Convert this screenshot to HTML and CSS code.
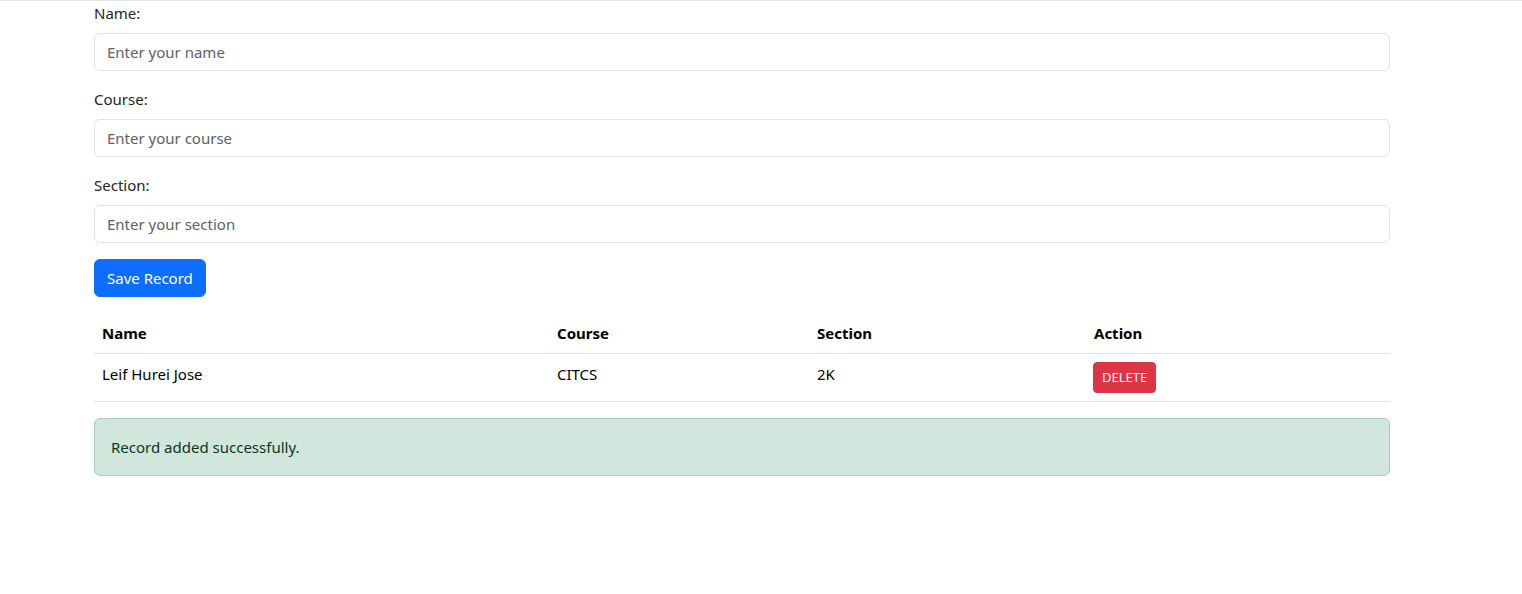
FILE: index.html
```html
<!DOCTYPE html>
<html lang="en">
<head>
<meta charset="utf-8">
<title>Records</title>
<link rel="stylesheet" href="styles.css">
</head>
<body>
<div class="topline"></div>
<main class="container">
  <form class="record-form">
    <div class="field">
      <label class="form-label">Name:</label>
      <input class="form-control" type="text" placeholder="Enter your name">
    </div>
    <div class="field">
      <label class="form-label">Course:</label>
      <input class="form-control" type="text" placeholder="Enter your course">
    </div>
    <div class="field">
      <label class="form-label">Section:</label>
      <input class="form-control" type="text" placeholder="Enter your section">
    </div>
    <button type="button" class="btn btn-primary">Save Record</button>
  </form>

  <table class="table">
    <thead>
      <tr>
        <th class="col-name">Name</th>
        <th class="col-course">Course</th>
        <th class="col-section">Section</th>
        <th class="col-action">Action</th>
      </tr>
    </thead>
    <tbody>
      <tr>
        <td>Leif Hurei Jose</td>
        <td>CITCS</td>
        <td>2K</td>
        <td><button type="button" class="btn btn-danger btn-sm">DELETE</button></td>
      </tr>
    </tbody>
  </table>

  <div class="alert alert-success">Record added successfully.</div>
</main>
</body>
</html>
```

FILE: styles.css
```css
* { box-sizing: border-box; }

html, body {
  margin: 0;
  padding: 0;
  background: #fff;
}

body {
  font-family: "Noto Sans", "Open Sans", "Liberation Sans", sans-serif;
  font-size: 16px;
  line-height: 24px;
  color: #212529;
}

.topline {
  height: 1px;
  background: #dee2e6;
}

.container {
  width: 1296px;
  margin-left: 94px;
  padding-top: 0;
}

.record-form {
  display: flex;
  flex-direction: column;
  align-items: flex-start;
}

.field {
  width: 100%;
  margin-bottom: 16px;
}

.form-label {
  display: block;
  margin-bottom: 8px;
  font-size: 15px;
}

.form-control {
  display: block;
  width: 100%;
  height: 38px;
  padding: 6px 12px;
  font-family: inherit;
  font-size: 15px;
  line-height: 24px;
  color: #212529;
  background: #fff;
  border: 1px solid #dee2e6;
  border-radius: 6px;
  outline: none;
}

.form-control::placeholder {
  color: #5c6166;
  opacity: 1;
}

.btn {
  font-family: inherit;
  border: 1px solid transparent;
  cursor: pointer;
  color: #fff;
}

.btn-primary {
  height: 38px;
  padding: 6px 12px;
  font-size: 15px;
  line-height: 24px;
  background: #0d6efd;
  border-color: #0d6efd;
  border-radius: 6px;
}

.btn-danger {
  background: #dc3545;
  border-color: #dc3545;
}

.btn-sm {
  height: 31px;
  padding: 4px 8px;
  font-size: 13px;
  line-height: 21px;
  border-radius: 4px;
}

.table {
  width: 100%;
  margin-top: 16px;
  margin-bottom: 16px;
  border-collapse: collapse;
  table-layout: fixed;
}

.table th,
.table td {
  text-align: left;
  padding: 8px;
  border-bottom: 1px solid #dee2e6;
  vertical-align: top;
  font-size: 15px;
}

.table th {
  font-weight: 700;
  color: #000;
}

.table td {
  color: #000;
}

.table td .btn-sm {
  margin-left: -1px;
}

.col-name { width: 455px; }
.col-course { width: 260px; }
.col-section { width: 277px; }
.col-action { width: 304px; }

.alert {
  padding: 16px;
  border: 1px solid #a3cfbb;
  border-radius: 6px;
  font-size: 15px;
}

.alert-success {
  background: #d1e7dd;
  color: #0a3622;
}
```
